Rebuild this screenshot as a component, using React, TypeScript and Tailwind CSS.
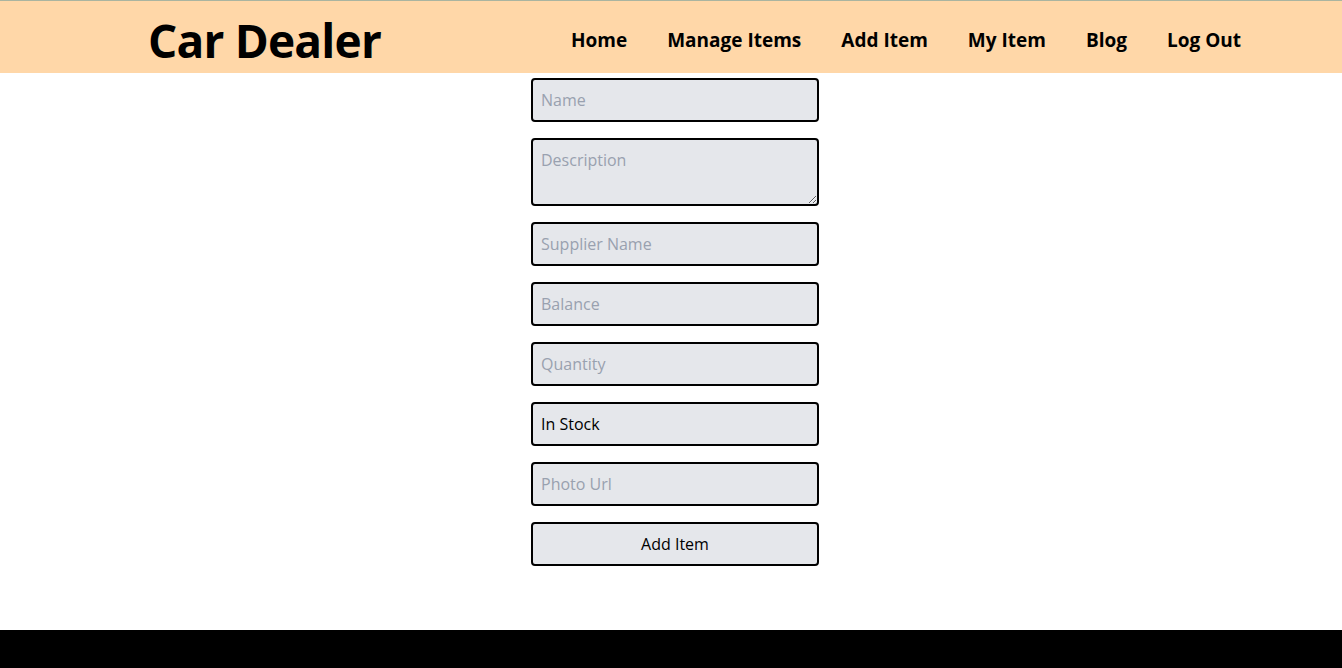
import { FC, ReactNode } from "react";

const navLinks = ["Home", "Manage Items", "Add Item", "My Item", "Blog", "Log Out"];

const fieldClass =
    "w-full h-[44px] px-2 py-2 bg-gray-200 border-2 border-black rounded text-base leading-6 text-black placeholder:text-gray-400 outline-none";

const App: FC = (): ReactNode => {
    return (
        <div className="min-h-screen flex flex-col bg-white font-['Open_Sans',sans-serif]">
            {/* Header */}
            <header className="flex items-center justify-between h-[73px] bg-orange-200 border-t border-[#aab4a0] pt-[6px] pl-[148px] pr-[101px]">
                <h1 className="text-[46px] leading-none font-bold text-black tracking-[-0.8px]">Car Dealer</h1>
                <nav className="flex items-center gap-10">
                    {navLinks.map((link) => (
                        <a key={link} href="#" className="text-[19px] font-bold text-black">
                            {link}
                        </a>
                    ))}
                </nav>
            </header>

            {/* Add item form */}
            <main className="flex justify-center pl-2 pt-[5px] pb-16">
                <form className="w-72 flex flex-col gap-4" onSubmit={(e) => e.preventDefault()}>
                    <input className={fieldClass} placeholder="Name" />
                    <textarea
                        rows={2}
                        className="w-full h-[68px] px-2 py-2 bg-gray-200 border-2 border-black rounded text-base leading-6 text-black placeholder:text-gray-400 outline-none"
                        placeholder="Description"
                    />
                    <input className={fieldClass} placeholder="Supplier Name" />
                    <input className={fieldClass} placeholder="Balance" />
                    <input className={fieldClass} placeholder="Quantity" />
                    <input className={fieldClass} defaultValue="In Stock" />
                    <input className={fieldClass} placeholder="Photo Url" />
                    <button type="submit" className="w-full h-[44px] bg-gray-200 border-2 border-black rounded text-base text-black">
                        Add Item
                    </button>
                </form>
            </main>

            {/* Footer */}
            <footer className="h-24 bg-black" />
        </div>
    );
};

export default App;
